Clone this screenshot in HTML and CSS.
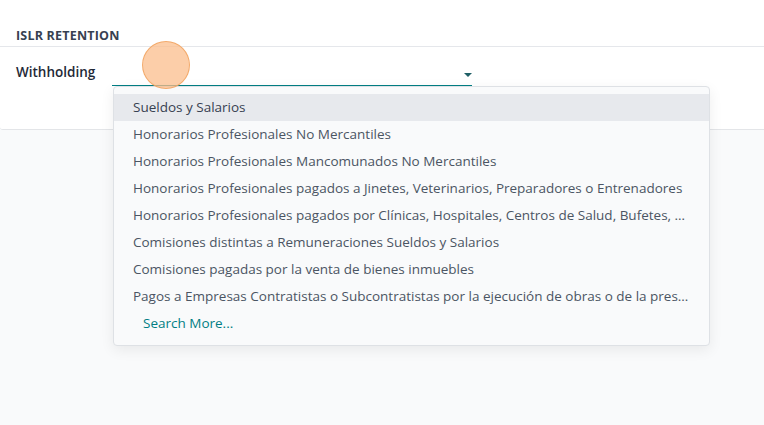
FILE: index.html
```html
<!DOCTYPE html>
<html>
<head>
<meta charset="utf-8">
<link rel="stylesheet" href="styles.css">
</head>
<body>
<div class="sheet">
  <div class="group-title">ISLR RETENTION</div>
  <div class="field-row">
    <label class="field-label">Withholding</label>
    <div class="field-input">
      <div class="input-line"></div>
      <span class="caret"></span>
      <ul class="dropdown">
        <li class="item active">Sueldos y Salarios</li>
        <li class="item">Honorarios Profesionales No Mercantiles</li>
        <li class="item">Honorarios Profesionales Mancomunados No Mercantiles</li>
        <li class="item">Honorarios Profesionales pagados a Jinetes, Veterinarios, Preparadores o Entrenadores</li>
        <li class="item">Honorarios Profesionales pagados por Clínicas, Hospitales, Centros de Salud, Bufetes, Escritorios y Consultorios</li>
        <li class="item">Comisiones distintas a Remuneraciones Sueldos y Salarios</li>
        <li class="item">Comisiones pagadas por la venta de bienes inmuebles</li>
        <li class="item">Pagos a Empresas Contratistas o Subcontratistas por la ejecución de obras o de la prestación de servicios</li>
        <li class="item more">Search More...</li>
      </ul>
    </div>
  </div>
</div>
<div class="click-dot"></div>
</body>
</html>
```
FILE: styles.css
```css
html, body {
  margin: 0;
  padding: 0;
}
body {
  width: 764px;
  height: 425px;
  background: #f9fafb;
  font-family: "Open Sans", "Noto Sans", sans-serif;
  color: #374151;
  position: relative;
  overflow: hidden;
}
.sheet {
  background: #ffffff;
  height: 130px;
  border-bottom: 1px solid #e3e5e8;
  border-bottom-left-radius: 3px;
  box-sizing: border-box;
}
.group-title {
  padding: 27px 16px 0 16px;
  height: 19px;
  font-size: 12.5px;
  font-weight: 700;
  letter-spacing: 0.2px;
  color: #374151;
  border-bottom: 1px solid #e5e7eb;
  line-height: 17px;
}
.field-row {
  display: flex;
  padding-top: 16px;
}
.field-label {
  width: 96px;
  padding-left: 16px;
  font-size: 13.5px;
  font-weight: 600;
  color: #1f2937;
  line-height: 18px;
}
.field-input {
  position: relative;
  width: 360px;
  height: 23px;
}
.input-line {
  position: absolute;
  left: 0;
  right: 0;
  bottom: 0;
  border-bottom: 1px solid #017e84;
}
.caret {
  position: absolute;
  right: 0;
  top: 10px;
  width: 0;
  height: 0;
  border-left: 4px solid transparent;
  border-right: 4px solid transparent;
  border-top: 4px solid #1f5f66;
}
.dropdown {
  position: absolute;
  top: 23px;
  left: 1px;
  width: 597px;
  box-sizing: border-box;
  margin: 0;
  padding: 7px 0 8px 0;
  list-style: none;
  background: #f9fafb;
  border: 1px solid #dee1e5;
  border-radius: 4px;
  box-shadow: 0 4px 14px rgba(0, 0, 0, 0.07);
  z-index: 2;
}
.item {
  height: 27px;
  line-height: 27px;
  padding: 0 19px 0 19px;
  font-size: 13.5px;
  color: #4b5563;
  white-space: nowrap;
  overflow: hidden;
  text-overflow: ellipsis;
}
.item.active {
  background: #e7e9ed;
  color: #374151;
}
.item.more {
  padding-left: 29px;
  color: #017e84;
}
.click-dot {
  position: absolute;
  left: 142px;
  top: 41px;
  width: 46px;
  height: 46px;
  border-radius: 50%;
  background: rgba(251, 190, 140, 0.75);
  border: 1.5px solid rgba(240, 160, 90, 0.8);
  z-index: 5;
}
```
